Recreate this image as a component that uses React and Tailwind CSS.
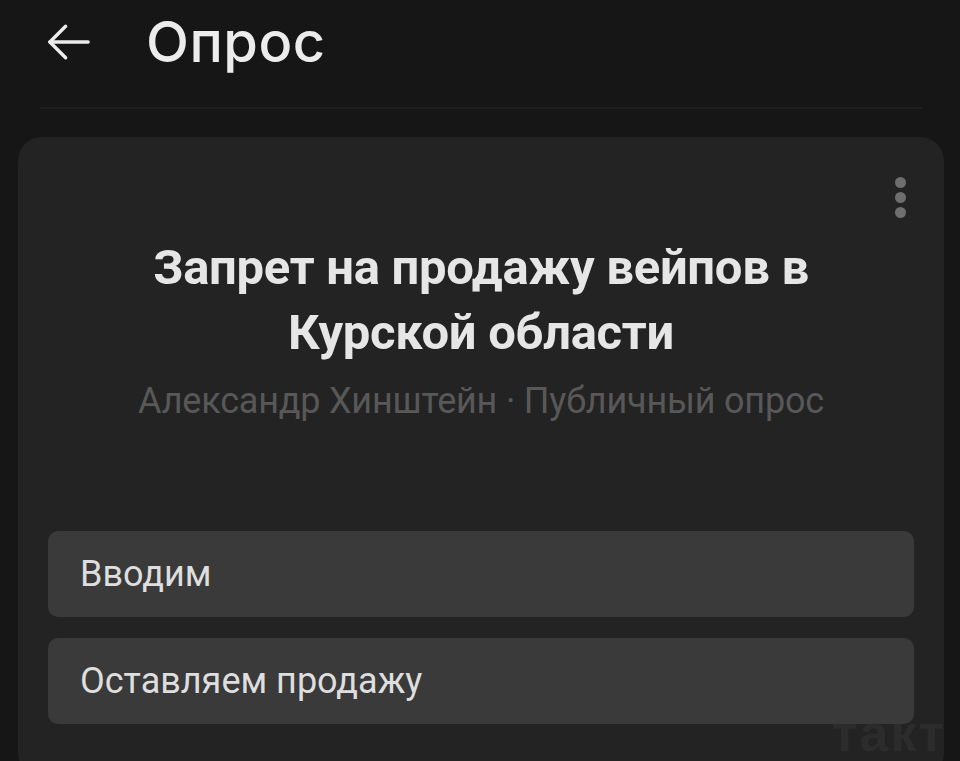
import React from 'react';

const options = ['Вводим', 'Оставляем продажу'];

export default function App() {
  return (
    <div className="relative h-[761px] w-[960px] overflow-hidden bg-[#161616] font-['Roboto',sans-serif]">
      {/* Header */}
      <div className="flex h-[84px] items-center pl-[42px]">
        <svg width="54" height="54" viewBox="0 0 24 24" fill="none" stroke="#ececec" strokeWidth="1.5" strokeLinecap="round" strokeLinejoin="round">
          <path d="M20.5 12H3.5" />
          <path d="M10.5 5 3.5 12l7 7" />
        </svg>
        <h1 className="ml-[50px] font-['Inter',sans-serif] text-[56px] font-medium leading-none tracking-[0.5px] text-[#ececec]">Опрос</h1>
      </div>
      <div className="ml-[40px] mr-[38px] mt-[23px] h-[2px] bg-[#202020]" />

      {/* Poll card */}
      <div className="relative ml-[18px] mr-[16px] mt-[28px] h-[640px] rounded-[24px] bg-[#232323] px-[30px] pt-[98px]">
        <div className="absolute right-[38px] top-[40px] flex flex-col gap-[4px]">
          <span className="h-[11px] w-[11px] rounded-full bg-[#6e6e6e]" />
          <span className="h-[11px] w-[11px] rounded-full bg-[#6e6e6e]" />
          <span className="h-[11px] w-[11px] rounded-full bg-[#6e6e6e]" />
        </div>

        <h2 className="text-center text-[49px] font-bold leading-[65px] tracking-[-0.3px] text-[#e6e6e6]">
          Запрет на продажу вейпов в<br />Курской области
        </h2>
        <p className="mt-[14px] px-[4px] text-center text-[36px] leading-[44px] tracking-[-0.2px] text-[#585858]">
          Александр Хинштейн · Публичный опрос
        </p>

        <div className="mt-[108px] flex flex-col gap-[21px]">
          {options.map((o) => (
            <div key={o} className="flex h-[86px] items-center rounded-[10px] bg-[#3a3a3a] px-[32px] text-[36px] text-[#dedede]">
              {o}
            </div>
          ))}
        </div>
      </div>

      <div className="absolute bottom-[2px] right-[14px] font-['Liberation_Sans',sans-serif] text-[52px] font-bold leading-none tracking-[2px] text-[#2c2c2c]">
        такт
      </div>
    </div>
  );
}
